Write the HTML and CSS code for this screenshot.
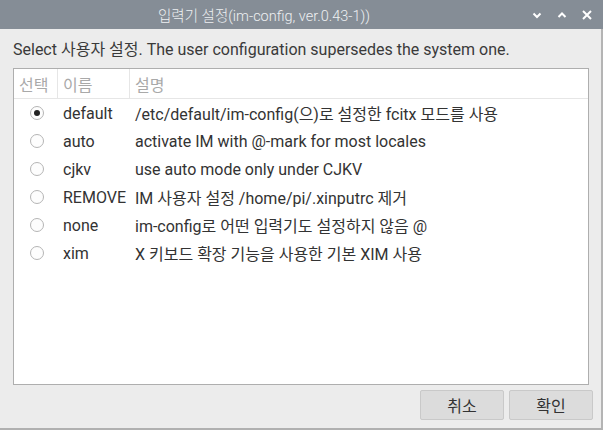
FILE: index.html
```html
<!DOCTYPE html>
<html lang="ko">
<head>
<meta charset="utf-8">
<link rel="stylesheet" href="styles.css">
</head>
<body>
<div class="window">
  <div class="titlebar">
    <div class="title">입력기 설정(im-config, ver.0.43-1))</div>
    <div class="controls">
      <svg class="ctl" width="10" height="10" viewBox="0 0 10 10"><path d="M1.5 3.5 L5 7 L8.5 3.5" fill="none" stroke="#fff" stroke-width="2"/></svg>
      <svg class="ctl" width="10" height="10" viewBox="0 0 10 10"><path d="M1.5 7 L5 3.5 L8.5 7" fill="none" stroke="#fff" stroke-width="2"/></svg>
      <svg class="ctl" width="10" height="10" viewBox="0 0 10 10"><path d="M1 1 L9 9 M9 1 L1 9" fill="none" stroke="#fff" stroke-width="2"/></svg>
    </div>
  </div>
  <div class="body">
    <div class="prompt">Select 사용자 설정. The user configuration supersedes the system one.</div>
    <div class="list">
      <div class="row head">
        <div class="c1">선택</div>
        <div class="c2">이름</div>
        <div class="c3">설명</div>
      </div>
      <div class="rows">
        <div class="row"><div class="c1"><span class="radio on"></span></div><div class="c2">default</div><div class="c3">/etc/default/im-config(으)로 설정한 fcitx 모드를 사용</div></div>
        <div class="row"><div class="c1"><span class="radio"></span></div><div class="c2">auto</div><div class="c3">activate IM with @-mark for most locales</div></div>
        <div class="row"><div class="c1"><span class="radio"></span></div><div class="c2">cjkv</div><div class="c3">use auto mode only under CJKV</div></div>
        <div class="row"><div class="c1"><span class="radio"></span></div><div class="c2">REMOVE</div><div class="c3">IM 사용자 설정 /home/pi/.xinputrc 제거</div></div>
        <div class="row"><div class="c1"><span class="radio"></span></div><div class="c2">none</div><div class="c3">im-config로 어떤 입력기도 설정하지 않음 @</div></div>
        <div class="row"><div class="c1"><span class="radio"></span></div><div class="c2">xim</div><div class="c3">X 키보드 확장 기능을 사용한 기본 XIM 사용</div></div>
      </div>
    </div>
    <div class="buttons">
      <button class="btn">취소</button>
      <button class="btn">확인</button>
    </div>
  </div>
</div>
</body>
</html>
```
FILE: styles.css
```css
html, body {
  margin: 0;
  padding: 0;
  background: #ececec;
}
body {
  font-family: Roboto, "Noto Sans CJK KR", sans-serif;
  width: 603px;
  height: 430px;
  overflow: hidden;
}
.window {
  width: 601px;
  height: 428px;
  border-right: 2px solid #b4b4b4;
  border-bottom: 2px solid #b0b0b0;
  display: flex;
  flex-direction: column;
  background: #ececec;
}
.titlebar {
  height: 29px;
  background: #858d96;
  display: flex;
  align-items: center;
  margin-right: -2px;
}
.title {
  flex: 1;
  text-align: center;
  color: #eef0f2;
  font-size: 14.5px;
  font-weight: 300;
}
.controls {
  display: flex;
  gap: 15px;
  padding-right: 11px;
  padding-left: 4px;
}
.ctl { display: block; }
.body {
  flex: 1;
  padding: 10px 12px 7px 13px;
  display: flex;
  flex-direction: column;
}
.prompt {
  font-size: 16px;
  color: #3a3a3a;
  height: 20px;
  line-height: 20px;
  margin-top: 1px;
}
.list {
  margin-top: 8px;
  width: 576px;
  height: 317px;
  background: #fff;
  border: 1px solid #aeaeae;
  box-sizing: border-box;
  font-size: 16px;
  color: #333;
}
.row {
  display: flex;
  height: 28px;
  align-items: center;
}
.row.head {
  height: 29px;
  color: #a9a9a9;
  border-bottom: 1px solid #e6e6e6;
}
.row.head .c1, .row.head .c2 {
  border-right: 1px solid #e6e6e6;
  height: 100%;
  display: flex;
  align-items: center;
  box-sizing: border-box;
}
.rows { padding-top: 0; }
.c1 {
  width: 44px;
  padding-left: 5px;
  box-sizing: border-box;
}
.c2 {
  width: 72px;
  padding-left: 5px;
  box-sizing: border-box;
}
.c3 {
  padding-left: 5px;
  white-space: nowrap;
}
.rows .c1 {
  padding-left: 16px;
  display: flex;
  align-items: center;
}
.rows .c2 { color: #333; }
.radio {
  width: 14px;
  height: 14px;
  border-radius: 50%;
  border: 1px solid #b5b5b5;
  box-sizing: border-box;
  background: #fdfdfd;
  position: relative;
  display: block;
}
.radio.on::after {
  content: "";
  position: absolute;
  left: 3px;
  top: 3px;
  width: 6px;
  height: 6px;
  border-radius: 50%;
  background: #222;
}
.buttons {
  display: flex;
  justify-content: flex-end;
  gap: 5px;
  margin-top: 5px;
  margin-right: -4px;
}
.btn {
  width: 84px;
  height: 30px;
  background: #dcdcdc;
  border: 1px solid #c9c9c9;
  border-radius: 2px;
  font-family: Roboto, "Noto Sans CJK KR", sans-serif;
  font-size: 16px;
  color: #333;
  padding: 0;
}
```
